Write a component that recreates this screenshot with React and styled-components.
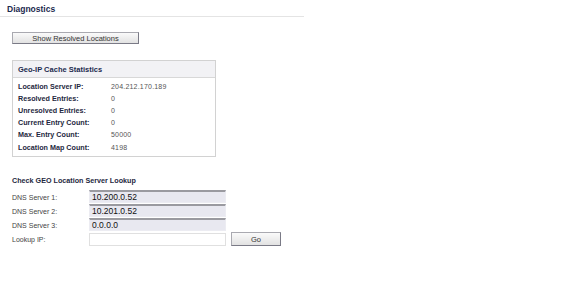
import { Fragment } from 'react';
import styled, { createGlobalStyle } from 'styled-components';

const GlobalStyle = createGlobalStyle`
    body {
        margin: 0;
        background: #ffffff;
        font-family: "Liberation Sans", sans-serif;
        font-size: 8px;
        color: #333333;
    }
`;

const Page = styled.div`
    width: 576px;
    height: 285px;
    padding: 5px 0 0 0;
    box-sizing: border-box;
`;

const Title = styled.div`
    width: 304px;
    padding: 0 0 2px 7px;
    box-sizing: border-box;
    border-bottom: 1px solid #e4e4e4;
    font-weight: bold;
    font-size: 8.5px;
    line-height: 9px;
    color: #1c2a4e;
`;

const Content = styled.div`
    padding: 15px 0 0 12px;
`;

const GrayButton = styled.button`
    display: block;
    width: ${p => p.width}px;
    height: ${p => p.height}px;
    padding: 0;
    border: 1px solid #a9a9b0;
    border-right-color: #7a7a86;
    border-bottom-color: #7a7a86;
    background: linear-gradient(#fafafa, #e2e2e2);
    font-family: "Liberation Sans", sans-serif;
    font-size: 7.5px;
    color: #333;
`;

const StatsBox = styled.div`
    width: 204px;
    margin-top: 16px;
    border: 1px solid #d2d2d2;
    box-sizing: border-box;
    padding-bottom: 3px;
`;

const StatsHeader = styled.div`
    height: 16px;
    padding-left: 5px;
    display: flex;
    align-items: center;
    background: #f2f2f5;
    border-bottom: 1px solid #d8d8d8;
    font-weight: bold;
    font-size: 7.5px;
    color: #1c2a4e;
`;

const StatsList = styled.div`
    padding: 2px 0 0 5px;
    display: grid;
    grid-template-columns: 93px 1fr;
    grid-auto-rows: 12.2px;
    align-items: center;
`;

const StatLabel = styled.div`
    font-weight: bold;
    font-size: 7.2px;
    color: #1e2840;
`;

const StatValue = styled.div`
    font-size: 7px;
    color: #555;
    letter-spacing: 0.2px;
`;

const SectionTitle = styled.div`
    margin-top: 19px;
    font-weight: bold;
    font-size: 7.2px;
    color: #1e2840;
`;

const Form = styled.div`
    margin-top: 5px;
    display: grid;
    grid-template-columns: 77px 137px auto;
    grid-auto-rows: 14px;
    align-items: center;
`;

const FieldLabel = styled.div`
    font-size: 7px;
    color: #444;
`;

const Field = styled.div`
    height: 13px;
    box-sizing: border-box;
    padding-left: 2px;
    display: flex;
    align-items: center;
    font-size: 8.5px;
    color: #111;
    background: ${p => (p.$readOnly ? '#e8e8f0' : '#ffffff')};
    border: 1px solid ${p => (p.$readOnly ? '#ececf2' : '#e0e0e0')};
    border-top: ${p => (p.$readOnly ? '2px solid #9a9aa0' : '1px solid #e0e0e0')};
    align-self: ${p => (p.$readOnly ? 'start' : 'center')};
`;

const GoCell = styled.div`
    padding-left: 5px;
    display: flex;
    align-items: center;
`;

const stats = [
    ['Location Server IP:', '204.212.170.189'],
    ['Resolved Entries:', '0'],
    ['Unresolved Entries:', '0'],
    ['Current Entry Count:', '0'],
    ['Max. Entry Count:', '50000'],
    ['Location Map Count:', '4198'],
];

const dns = [
    ['DNS Server 1:', '10.200.0.52'],
    ['DNS Server 2:', '10.201.0.52'],
    ['DNS Server 3:', '0.0.0.0'],
];

function App() {
    return (
        <Page>
            <GlobalStyle />
            <Title>Diagnostics</Title>
            <Content>
                <GrayButton width={127} height={12}>Show Resolved Locations</GrayButton>
                <StatsBox>
                    <StatsHeader>Geo-IP Cache Statistics</StatsHeader>
                    <StatsList>
                        {stats.map(([label, value]) => (
                            <Fragment key={label}>
                                <StatLabel>{label}</StatLabel>
                                <StatValue>{value}</StatValue>
                            </Fragment>
                        ))}
                    </StatsList>
                </StatsBox>
                <SectionTitle>Check GEO Location Server Lookup</SectionTitle>
                <Form>
                    {dns.map(([label, value]) => (
                        <Fragment key={label}>
                            <FieldLabel>{label}</FieldLabel>
                            <Field $readOnly>{value}</Field>
                            <div />
                        </Fragment>
                    ))}
                    <FieldLabel>Lookup IP:</FieldLabel>
                    <Field />
                    <GoCell>
                        <GrayButton width={50} height={14}>Go</GrayButton>
                    </GoCell>
                </Form>
            </Content>
        </Page>
    );
}

export default App;
